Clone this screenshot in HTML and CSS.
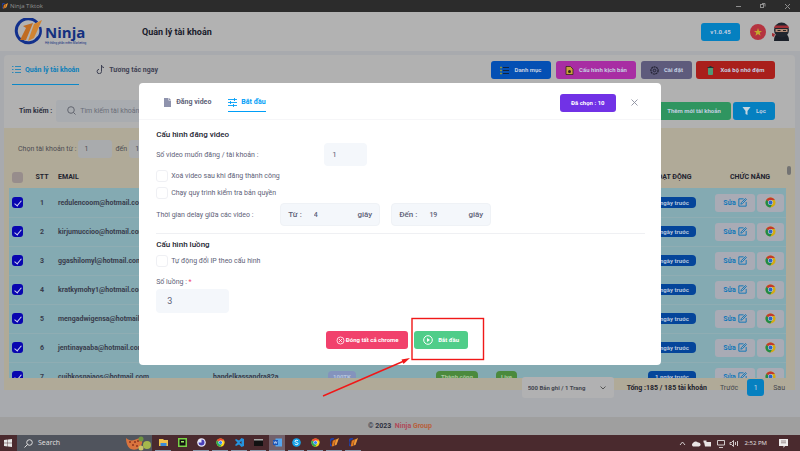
FILE: index.html
```html
<!DOCTYPE html>
<html lang="vi">
<head>
<meta charset="utf-8">
<title>Ninja Tiktok</title>
<link rel="stylesheet" href="styles.css">
</head>
<body>
<svg class="defs" aria-hidden="true">
  <symbol id="chrome" viewBox="0 0 24 24">
    <circle cx="12" cy="12" r="11" fill="#d3ab14"/>
    <path d="M12 12 2.500 6.500A11 11 0 0 1 21.500 6.500H12z" fill="#c4382c"/>
    <path d="M2.500 6.500A11 11 0 0 0 11.500 23l5-8.500-4.500-2.500z" fill="#1f8a48"/>
    <circle cx="12" cy="12" r="5.500" fill="#c8c8d2"/><circle cx="12" cy="12" r="4.200" fill="#2b66c8"/>
  </symbol>
  <symbol id="edit" viewBox="0 0 16 16">
    <path d="M10 1.500H1.500v13h13V7M5 11l1-3 7.500-7 1.500 1.500L8 10z" fill="none" stroke="#1077b8" stroke-width="1.700"/>
  </symbol>
  <symbol id="mark" viewBox="0 0 16 16">
    <path d="M7 1A7 7 0 0 0 3 14" fill="none" stroke="#2040a8" stroke-width="3"/><path d="M5 5 10 2 7 14 3 15z" fill="#e07a1e"/><path d="M10 3 16 0 12 11 8 14z" fill="#f09a38"/>
  </symbol>
</svg>

<header class="titlebar">
  <svg class="i9" aria-hidden="true"><use href="#mark"/></svg>
  <span>Ninja Tiktok</span>
  <svg class="winctl" viewBox="0 0 54 8" aria-hidden="true"><g fill="none" stroke="#8e8e8e"><path d="M0 4.500h5"/><rect x="24.500" y="2.500" width="3" height="3"/><path d="M26 1.500h3v3M49 2l5 5M54 2l-5 5"/></g></svg>
</header>

<div class="brandbar">
  <div class="logo">
    <svg class="emblem" viewBox="0 0 29 27" aria-hidden="true">
      <path d="M23 4.500A12 12 0 1 0 24.500 19" fill="none" stroke="#12308c" stroke-width="3"/>
      <path d="M26 9A12 12 0 0 1 22 22" fill="none" stroke="#12308c" stroke-width="2.500"/>
      <path d="M9 8 19 5 12 22H6L12 10z" fill="#c06c22"/><path d="M20 6 28 2 20 20 14 23z" fill="#d18432"/>
    </svg>
    <div class="wordmark"><b>Ninja</b><small>Hệ thống phần mềm Marketing</small></div>
  </div>
  <h1>Quản lý tài khoản</h1>
  <button class="btn sky version">v1.0.45</button>
  <svg class="i16" viewBox="0 0 16 16" aria-hidden="true"><circle cx="8" cy="8" r="8" fill="#b53440"/><path d="m8 4 1 3h3L9.700 8.800l.9 3L8 10l-2.600 1.800.9-3L4 7h3z" fill="#c3a92c"/></svg>
  <svg class="ninja" viewBox="0 0 18 20" aria-hidden="true"><path d="M2 19c0-4 1-6 3-7h9c2 1 3 3 3 7z" fill="#1b2029"/><circle cx="9.500" cy="8" r="7.500" fill="#20252e"/><path d="M3 3.500h13l1 2.500H2z" fill="#9f2d35"/><path d="M3.500 7h12v3h-12z" fill="#b08a76"/><path d="M5.500 8.500h3M11 8.500h3" stroke="#222"/><path d="M0 11l3 1-1 3-2-1z" fill="#9f2d35"/></svg>
</div>

<main class="card">
  <div class="toolbar">
    <nav class="tabs">
      <a class="tab on" href="#accounts"><svg class="i9" viewBox="0 0 9 9" aria-hidden="true"><path d="M0 1.500h1.500M3 1.500h6M0 4.500h1.500M3 4.500h6M0 7.500h1.500M3 7.500h6" stroke="currentColor" stroke-width=".8"/></svg>Quản lý tài khoản</a>
      <a class="tab" href="#interact"><svg class="i9" viewBox="0 0 9 9" aria-hidden="true"><path d="M5.500 0v6.500a2.200 2.200 0 1 1-2.500-2.200M5.500 0c0 1.500 1 2.500 2.500 2.500" fill="none" stroke="currentColor"/></svg>Tương tác ngay</a>
    </nav>
    <button class="btn blue"><svg class="i9" viewBox="0 0 9 9" aria-hidden="true"><path d="M0 1.500h2M0 4.500h2M0 7.500h2" stroke="#8a9440" stroke-width="1.600"/><path d="M3 1.500h6M3 4.500h6M3 7.500h6" stroke="#10243f"/></svg>Danh mục</button>
    <button class="btn pink"><svg class="i9" viewBox="0 0 9 9" aria-hidden="true"><path d="M1 .5h4.500l2.500 2.500v5.500H1z" fill="#c9a23a" stroke="#33251c" stroke-width=".8"/><circle cx="4.500" cy="5.500" r="1.500" fill="#33251c"/></svg>Cấu hình kịch bản</button>
    <button class="btn slate"><svg class="i9" viewBox="0 0 9 9" aria-hidden="true"><circle cx="4.500" cy="4.500" r="3.600" fill="none" stroke="#252536" stroke-width="1.300" stroke-dasharray="2 .6"/><circle cx="4.500" cy="4.500" r="1.300" fill="none" stroke="#252536"/></svg>Cài đặt</button>
    <button class="btn red"><svg class="i9" viewBox="0 0 9 9" aria-hidden="true"><rect x="2" y="1.500" width="5" height="7.500" rx="1" fill="#4f9a76"/><path d="M1.500 1.500h6M3.500.5h2" stroke="#223333"/></svg>Xoá bộ nhớ đệm</button>
  </div>
  <div class="filters">
    <label for="q">Tìm kiếm :</label>
    <div class="search"><svg class="i9" viewBox="0 0 9 9" aria-hidden="true"><circle cx="4" cy="4" r="3.300" fill="none" stroke="#62656f"/><path d="m6.500 6.500 2 2" stroke="#62656f"/></svg><input id="q" type="search" placeholder="Tìm kiếm tài khoản"></div>
    <button class="btn green add">Thêm mới tài khoản</button>
    <button class="btn sky filter"><svg class="i9" viewBox="0 0 9 9" aria-hidden="true"><path d="M.5 1h8L5.500 5v4l-2-1V5z" fill="#c5d5df"/></svg>Lọc</button>
  </div>

  <section class="panel">
    <div class="range"><label for="from">Chọn tài khoản từ :</label><input id="from" value="1"><label for="to">đến</label><input id="to" value="10"></div>
    <div class="scroller">
      <table>
        <colgroup><col class="c-check"><col class="c-stt"><col class="c-mail"><col class="c-user"><col class="c-tk"><col class="c-state"><col class="c-live"><col class="c-act"><col class="c-fn"></colgroup>
        <thead><tr><th><input type="checkbox" aria-label="Tất cả"></th><th>STT</th><th class="left">EMAIL</th><th></th><th></th><th></th><th></th><th>HOẠT ĐỘNG</th><th>CHỨC NĂNG</th></tr></thead>
        <tbody>
          <tr><td><input type="checkbox" checked aria-label="1"></td><td>1</td><td class="left">redulencoom@hotmail.com</td><td></td><td></td><td></td><td></td><td><span class="pill navy">1 ngày trước</span></td><td><div class="acts"><button class="edit">Sửa<svg aria-hidden="true"><use href="#edit"/></svg></button><button class="open" aria-label="Chrome"><svg aria-hidden="true"><use href="#chrome"/></svg></button></div></td></tr>
          <tr><td><input type="checkbox" checked aria-label="2"></td><td>2</td><td class="left">kirjumuccioo@hotmail.com</td><td></td><td></td><td></td><td></td><td><span class="pill navy">1 ngày trước</span></td><td><div class="acts"><button class="edit">Sửa<svg aria-hidden="true"><use href="#edit"/></svg></button><button class="open" aria-label="Chrome"><svg aria-hidden="true"><use href="#chrome"/></svg></button></div></td></tr>
          <tr><td><input type="checkbox" checked aria-label="3"></td><td>3</td><td class="left">ggashilomyl@hotmail.com</td><td></td><td></td><td></td><td></td><td><span class="pill navy">1 ngày trước</span></td><td><div class="acts"><button class="edit">Sửa<svg aria-hidden="true"><use href="#edit"/></svg></button><button class="open" aria-label="Chrome"><svg aria-hidden="true"><use href="#chrome"/></svg></button></div></td></tr>
          <tr><td><input type="checkbox" checked aria-label="4"></td><td>4</td><td class="left">kratkymohy1@hotmail.com</td><td></td><td></td><td></td><td></td><td><span class="pill navy">1 ngày trước</span></td><td><div class="acts"><button class="edit">Sửa<svg aria-hidden="true"><use href="#edit"/></svg></button><button class="open" aria-label="Chrome"><svg aria-hidden="true"><use href="#chrome"/></svg></button></div></td></tr>
          <tr><td><input type="checkbox" checked aria-label="5"></td><td>5</td><td class="left">mengadwigensa@hotmail.com</td><td></td><td></td><td></td><td></td><td><span class="pill navy">1 ngày trước</span></td><td><div class="acts"><button class="edit">Sửa<svg aria-hidden="true"><use href="#edit"/></svg></button><button class="open" aria-label="Chrome"><svg aria-hidden="true"><use href="#chrome"/></svg></button></div></td></tr>
          <tr><td><input type="checkbox" checked aria-label="6"></td><td>6</td><td class="left">jentinayaaba@hotmail.com</td><td></td><td></td><td></td><td></td><td><span class="pill navy">1 ngày trước</span></td><td><div class="acts"><button class="edit">Sửa<svg aria-hidden="true"><use href="#edit"/></svg></button><button class="open" aria-label="Chrome"><svg aria-hidden="true"><use href="#chrome"/></svg></button></div></td></tr>
          <tr><td><input type="checkbox" checked aria-label="7"></td><td>7</td><td class="left">cuihkosnajaos@hotmail.com</td><td class="left">handelkassandra82a</td><td class="left"><span class="pill lilac">100TK</span></td><td class="left"><span class="pill leaf">Thành công</span></td><td class="left"><span class="pill leaf">Live</span></td><td><span class="pill navy">1 ngày trước</span></td><td><div class="acts"><button class="edit">Sửa<svg aria-hidden="true"><use href="#edit"/></svg></button><button class="open" aria-label="Chrome"><svg aria-hidden="true"><use href="#chrome"/></svg></button></div></td></tr>
        </tbody>
      </table>
      <div class="track"><div class="thumb"></div></div>
    </div>
  </section>
</main>

<div class="pager">
  <div class="size"><select aria-label="Bản ghi / trang"><option>500 Bản ghi / 1 Trang</option></select><svg viewBox="0 0 6 4" aria-hidden="true"><path d="m.5.5 2.500 2.500L5.500.5" fill="none" stroke="#555"/></svg></div>
  <b>Tổng :185 / 185 tài khoản</b>
  <a href="#prev">Trước</a><a class="page" href="#p1">1</a><a href="#next">Sau</a>
</div>

<footer class="foot">© 2023&nbsp; <a href="#ninja">Ninja <span>Group</span></a></footer>

<div class="taskbar">
  <svg class="start" viewBox="0 0 8 8" aria-hidden="true"><path d="M0 1l3.600-.5v3.300H0zM4 .4 8 0v3.800H4zM0 4.200h3.600v3.300L0 7zM4 4.200h4V8l-4-.5z" fill="#e6e6e6"/></svg>
  <div class="find"><svg class="i9" viewBox="0 0 9 9" aria-hidden="true"><circle cx="5.500" cy="3.500" r="2.800" fill="none" stroke="#ddd"/><path d="M3.500 5.500.5 8.500" stroke="#ddd"/></svg>Search
    <svg class="fruit" viewBox="0 0 26 15" aria-hidden="true"><path d="M0 2c3 3 7 3 11 1 3-2 6 0 5 4-1 5-6 8-11 6C2 12 0 7 0 2z" fill="#d9743e"/><path d="M3 6h2M8 6h2M6 9h2M11 5h2M10 10h2" stroke="#8d3520" stroke-width="1.500"/><circle cx="15" cy="3" r="2.500" fill="#6f9440"/><circle cx="21" cy="9" r="4" fill="#a5b84c"/><circle cx="15" cy="12" r="2.500" fill="#c9c36a"/></svg>
  </div>
  <div class="apps">
    <span class="app run"><svg viewBox="0 0 9 9"><path d="M0 1h4l1 1h4v6H0z" fill="#f0c24c"/><path d="M1.500 5h6v3h-6z" fill="#3a8bd8"/></svg></span>
    <span class="app"><svg viewBox="0 0 9 9"><path d="M0 0h9v9H0z" fill="#79d346"/><path d="M1.500 1.500h6v6h-6z" fill="#111"/><path d="M3 3h3v1.500H3z" fill="#9bea60"/></svg></span>
    <span class="app run"><svg viewBox="0 0 9 9"><circle cx="4.500" cy="4.500" r="4.300" fill="#e9e9fa"/><path d="M4.500 1.500a3 3 0 1 1-3 3h3z" fill="#4940b8"/></svg></span>
    <span class="app run"><svg class="bright"><use href="#chrome"/></svg></span>
    <span class="app run"><svg viewBox="0 0 9 9"><path d="M6.500 0 9 1v7L6.500 9 4 6.500 1 8 0 7l2.500-2.500L0 2l1-1 3 1.500zM6.500 3 4.500 4.500l2 1.500z" fill="#2593dd" fill-rule="evenodd"/></svg></span>
    <span class="app run"><svg viewBox="0 0 9 9"><path d="M0 1h9v7H0z" fill="#111"/><path d="M0 1h9v1.500H0z" fill="#aaa"/></svg></span>
    <span class="app run active"><svg viewBox="0 0 9 9"><path d="M2.500.5H9v8H2.500z" fill="#55a6ef"/><path d="M0 2h5v5H0z" fill="#1b55b6"/><path d="m1 3.500.7 2 .8-2 .8 2 .7-2" stroke="#fff" stroke-width=".6" fill="none"/></svg></span>
    <span class="app run"><svg viewBox="0 0 9 9"><circle cx="4.500" cy="4.500" r="4.300" fill="#18a4e8"/><path d="M6 2.800c-1-1-3-.7-3 .5s3 1 3 2.300-2.300 1.400-3.200.2" stroke="#fff" fill="none"/></svg></span>
    <span class="app run"><svg class="bright"><use href="#chrome"/></svg></span>
    <span class="app run"><svg><use href="#mark"/></svg></span>
    <span class="app run"><svg><use href="#mark"/></svg></span>
  </div>
  <svg class="tray" viewBox="0 0 60 9" aria-hidden="true"><g fill="none" stroke="#e0dcdc"><path d="m1 6 2.500-3L6 6M38.500 1.500h7v4.500h-7zM40 8.500h4M51 3.500h1.500l2-2v6l-2-2H51zM56.500 3v3M58.500 2v5" stroke-width=".9"/></g><path d="M14 7.500a2 2 0 0 1 0-3.500 3 3 0 0 1 5-.5 2 2 0 0 1 1 4zM25 3h7v4.500h-6zM24.500 1.500h3v2h-3z" fill="#e8e4e4"/></svg>
  <time>2:52 PM</time>
  <svg class="note" viewBox="0 0 9 9" aria-hidden="true"><path d="M0 0h9v7H6L4.500 9V7H0z" fill="#efecec"/><path d="M2 2h5M2 3.800h5" stroke="#776666" stroke-width=".7"/></svg>
</div>

<div class="overlay">
  <section class="modal" role="dialog" aria-label="Bắt đầu">
    <div class="mhead">
      <a class="mtab" href="#post"><svg class="i9" viewBox="0 0 9 9" aria-hidden="true"><path d="M1 0h4.500v2.500H8V9H1z" fill="#8f93ad"/><path d="m6 0 2 2H6z" fill="#8f93ad"/></svg>Đăng video</a>
      <a class="mtab on" href="#start"><svg class="i9" viewBox="0 0 9 9" aria-hidden="true"><path d="M0 1.500h9M0 4.500h9M0 7.500h9M6.500 0v3M2.500 3v3M5.500 6v3" stroke="currentColor" stroke-width=".9"/></svg>Bắt đầu</a>
      <button class="btn violet">Đã chọn : 10</button>
      <button class="close" aria-label="Đóng"><svg viewBox="0 0 7 7" aria-hidden="true"><path d="m.5.5 6 6M6.500.5l-6 6" stroke="#8b8f9e" stroke-width=".9"/></svg></button>
    </div>
    <div class="mbody">
      <h2>Cấu hình đăng video</h2>
      <div class="line count"><label for="n">Số video muốn đăng / tài khoản :</label><input id="n" class="field" value="1"></div>
      <label class="tick"><input type="checkbox">Xoá video sau khi đăng thành công</label>
      <label class="tick"><input type="checkbox">Chạy quy trình kiểm tra bản quyền</label>
      <div class="line delay"><span>Thời gian delay giữa các video :</span>
        <div class="group"><label for="a">Từ :</label><input id="a" value="4"><span>giây</span></div>
        <div class="group"><label for="b">Đến :</label><input id="b" value="19"><span>giây</span></div>
      </div>
      <hr>
      <h2>Cấu hình luồng</h2>
      <label class="tick"><input type="checkbox">Tự động đổi IP theo cấu hình</label>
      <label class="threads" for="t">Số luồng : <i>*</i></label>
      <input id="t" class="field wide" value="3">
    </div>
    <div class="mfoot">
      <button class="btn rose"><svg class="i9" viewBox="0 0 9 9" aria-hidden="true"><circle cx="4.500" cy="4.500" r="3.500" fill="none" stroke="#fff" stroke-width=".8"/><path d="m3 3 3 3M6 3 3 6" stroke="#fff" stroke-width=".8"/></svg>Đóng tất cả chrome</button>
      <button class="btn mint"><svg class="i10" viewBox="0 0 10 10" aria-hidden="true"><circle cx="5" cy="5" r="4.300" fill="none" stroke="#fff"/><path d="M4 3v4l3-2z" fill="#fff"/></svg>Bắt đầu</button>
    </div>
    <svg class="callout" viewBox="0 0 164 82" aria-hidden="true"><rect x="90" y="1.500" width="71.500" height="41" fill="none" stroke="#f01818" stroke-width="1.400"/><path d="M1 79 82 44" stroke="#f01818" stroke-width="1.400"/><path d="m88 41-8.500 1.500 2 4.500z" fill="#f01818"/></svg>
  </section>
</div>
</body>
</html>
```
FILE: styles.css
```css
* { box-sizing: border-box; }
body {
  margin: 0;
  min-height: 100vh;
  display: flex;
  flex-direction: column;
  position: relative;
  background: #a8aaae;
  color: #2e3040;
  font: 7px/12px Roboto, "Noto Sans", sans-serif;
}
a { color: inherit; text-decoration: none; }
input, select, button { font: inherit; color: inherit; border: 0; margin: 0; padding: 0; min-width: 0; }
svg { flex: none; display: block; }
.defs { position: absolute; width: 0; height: 0; }
.i9 { width: 9px; height: 9px; }
.i10 { width: 10px; height: 10px; }
.i16 { width: 16px; height: 16px; }
.ninja { width: 18px; height: 20px; }

.titlebar { display: flex; align-items: center; gap: 2px; height: 12px; padding: 0 10px 0 2px; background: #2c2c2c; color: #929292; font: 6px/12px "Open Sans", sans-serif; }
.titlebar .i9 { width: 6px; height: 6px; }
.winctl { width: 54px; height: 8px; margin-left: auto; }

.brandbar { display: flex; align-items: center; height: 39px; padding: 0 10px 0 14px; background: #b2b2b2; }
.logo { display: flex; align-items: center; width: 128px; gap: 2px; }
.emblem { width: 29px; height: 27px; }
.wordmark { color: #14307f; padding-top: 4px; }
.wordmark b { display: block; font: 700 15px/18px "Open Sans", sans-serif; }
.wordmark small { display: block; font-size: 3px; line-height: 4px; white-space: nowrap; }
h1 { margin: 0 auto 0 0; font-size: 9px; font-weight: 700; color: #191b2b; }

.btn { display: flex; align-items: center; justify-content: center; gap: 5px; height: 18px; border-radius: 3px; font-size: 6px; font-weight: 700; white-space: nowrap; color: #c4cfe0; }
.sky { background: #0580c0; }
.version { width: 39px; margin-right: 10px; }
.version + .i16 { margin-right: 6px; }
.blue { background: #0450b4; width: 60px; }
.pink { background: #a82da3; width: 80px; margin-left: 5px; }
.slate { background: #5e5b7c; width: 51px; margin-left: 5px; }
.red { background: #a91f1b; width: 79px; margin-left: 4px; }
.green { background: #2f9560; }
.violet { background: #7132e6; color: #fff; width: 56px; }
.rose { background: #f1416c; color: #fff; width: 82px; }
.mint { background: #50cd89; color: #fff; width: 54px; }
.rose { gap: 1px; }

.card { margin: 4px 5px 0 4px; background: #b1b1b1; border-radius: 4px 4px 0 0; }
.toolbar { display: flex; align-items: center; height: 30px; padding: 0 20px 0 8px; }
.tabs { display: flex; gap: 17px; margin-right: auto; align-self: stretch; }
.tab { display: flex; align-items: center; gap: 4px; font-weight: 700; color: #3f4254; border-bottom: 1px solid transparent; }
.tab.on { color: #0c7fba; border-color: #0c88c8; }
.filters { display: flex; align-items: center; height: 43px; padding: 8px 20px 0 15px; }
.filters label { font-weight: 700; }
.search { display: flex; align-items: center; gap: 4px; width: 180px; height: 22px; margin: 0 auto 0 4px; padding-left: 11px; background: #a9acb0; border-radius: 3px; }
.search input { flex: 1; background: none; }
.search input::placeholder { color: #6b6e79; opacity: 1; }
.add { width: 84px; padding-left: 10px; margin-right: 2px; }
.filter { width: 42px; }

.panel { height: 262px; padding: 12px 4px 0 5px; background: #b0aa98; }
.range { display: flex; align-items: center; gap: 2px; height: 18px; padding-left: 9px; color: #4d4d53; }
.range input { width: 34px; height: 18px; padding-left: 6px; background: #a9abad; border-radius: 3px; }
.range input + label { margin: 0 0 0 1px; }
.scroller { display: flex; gap: 1px; height: 212px; margin-top: 8px; overflow: hidden; }
table { flex: 1; table-layout: fixed; border-collapse: collapse; }
th, td { padding: 0; text-align: center; font-weight: 700; white-space: nowrap; }
th { height: 22px; color: #22232f; }
td { height: 29px; color: #393c4c; }
tbody { background: #84aab2; }
tbody tr + tr { box-shadow: inset 0 1px #8fadb3; }
.left { text-align: left; }
.c-check { width: 17px; }
.c-stt { width: 32px; }
.c-mail { width: 155px; }
.c-user { width: 115px; }
.c-tk { width: 108px; }
.c-state { width: 60px; }
.c-live { width: 134px; }
.c-act { width: 84px; }
.c-fn { width: 72px; }
input[type=checkbox] { appearance: none; display: block; width: 11px; height: 11px; margin: 0 auto; border-radius: 3px; background: #978d8c; }
td input[type=checkbox]:checked { background: #0805b0; }
td input[type=checkbox]:checked::after { content: ""; display: block; width: 3px; height: 6px; margin: 2px 0 0 4px; border: solid #cfcff0; border-width: 0 1px 1px 0; transform: rotate(40deg); }
.pill { display: inline-block; height: 11px; padding: 0 5px; border-radius: 4px; font-size: 6px; line-height: 11px; vertical-align: middle; color: #b5c5dc; }
.navy { background: #04459a; width: 48px; text-align: center; padding: 0; }
.lilac { background: #8493bd; }
.leaf { background: #4b8a3d; color: #a9c79e; }
.acts { display: flex; gap: 2px; justify-content: flex-end; padding-right: 2px; }
.acts button { display: flex; align-items: center; justify-content: center; gap: 2px; height: 18px; border-radius: 3px; background: #a9abb5; color: #1077b8; font-weight: 700; }
.acts svg { width: 9px; height: 9px; }
.edit { width: 40px; }
.open { width: 27px; }
.acts .open svg { width: 11px; height: 11px; }
.track { width: 4px; }
.thumb { height: 9px; border-radius: 2px; background: #737373; }

.pager { display: flex; align-items: center; gap: 13px; height: 21px; margin-top: -13px; padding-right: 15px; justify-content: flex-end; color: #44464f; position: relative; }
.size { display: flex; align-items: center; width: 92px; height: 21px; padding: 0 8px 0 6px; background: #b1b1b2; border-radius: 3px; }
.size select { flex: 1; appearance: none; background: none; font-size: 6px; font-weight: 700; }
.size svg { width: 6px; height: 4px; }
.pager b { color: #22232f; font-weight: 700; }
.page { display: grid; place-items: center; width: 17px; height: 17px; margin: 0 -4px; border-radius: 3px; background: #0580c0; color: #c6dbe8; }

.foot { margin-top: auto; height: 18px; background: #9f9f9f; text-align: center; font-weight: 700; line-height: 19px; }
.foot a { color: #b04a5a; }
.foot span { color: #b8603c; }

.taskbar { display: flex; align-items: center; height: 16px; padding: 0 12px 0 4px; background: #4a2a2e; color: #e4e0e0; }
.start { width: 8px; height: 8px; margin-right: 5px; }
.find { display: flex; align-items: center; gap: 5px; width: 135px; height: 16px; padding-left: 7px; background: #50545d; font: 7px/16px "Open Sans", sans-serif; }
.fruit { width: 26px; height: 15px; margin-left: auto; }
.apps { display: flex; gap: 3px; margin: 0 auto 0 3px; }
.app { display: grid; place-items: center; width: 16px; height: 16px; border-bottom: 1px solid transparent; }
.app svg { width: 9px; height: 9px; }
.bright { filter: brightness(1.250); }
.app.run { border-color: #8b99ad; }
.active { background: #72606a; }
.tray { width: 60px; height: 9px; margin-right: 6px; }
time { font: 6px/16px "Open Sans", sans-serif; }
.note { width: 9px; height: 9px; margin-left: 12px; }

.overlay { position: absolute; inset: 0; display: flex; justify-content: center; align-items: flex-start; padding-top: 83px; }
.modal { position: relative; width: 65.200%; height: 282px; display: flex; flex-direction: column; background: #fff; border-radius: 4px; color: #5e6278; }
.mhead { display: flex; align-items: center; height: 37px; padding: 3px 20px 0 24px; border-bottom: 1px solid #f6f6f8; }
.mtab { display: flex; align-items: center; gap: 4px; height: 19px; margin-right: 17px; font-weight: 700; border-bottom: 1px solid transparent; }
.mtab.on { color: #009ef7; border-color: #009ef7; margin-right: auto; }
.close { display: grid; place-items: center; width: 13px; height: 13px; margin-left: 12px; background: none; }
.close svg { width: 7px; height: 7px; }
.mbody { padding: 8px 16px 0 17px; }
h2 { margin: 0; font-size: 8px; line-height: 14px; font-weight: 500; color: #1b1d30; }
.line { display: flex; align-items: center; }
.count { height: 25px; }
.count label { width: 168px; }
.field { width: 43px; height: 23px; padding-left: 8px; border-radius: 4px; background: #f4f7fb; font-size: 8px; }
.wide { display: block; width: 73px; height: 24px; padding-left: 11px; font-size: 9px; }
.tick { display: flex; align-items: center; gap: 3px; height: 17px; }
.tick input[type=checkbox] { width: 12px; height: 12px; margin: 0; border: 1px solid #eff0f4; background: #fff; }
.delay { height: 25px; margin-top: 1px; }
.delay > span { width: 124px; }
.group { display: flex; align-items: center; height: 23px; width: 100px; margin-right: 11px; padding: 0 7px; background: #f4f7fb; border: 1px solid #eff2f6; border-radius: 4px; font-size: 8px; font-weight: 500; }
.group input { flex: 1; width: 0; margin: 0 6px; padding-left: 6px; background: none; font-size: 7px; }
hr { margin: 6px 0 4px; border: 0; border-top: 1px solid #eff0f3; }
.threads { display: block; margin: 7px 0 1px; }
.threads i { color: #f1416c; font-style: normal; }
.mfoot { display: flex; gap: 6px; margin: auto 0 16px 187px; }
.callout { position: absolute; left: 183px; top: 234px; width: 164px; height: 82px; }
```
